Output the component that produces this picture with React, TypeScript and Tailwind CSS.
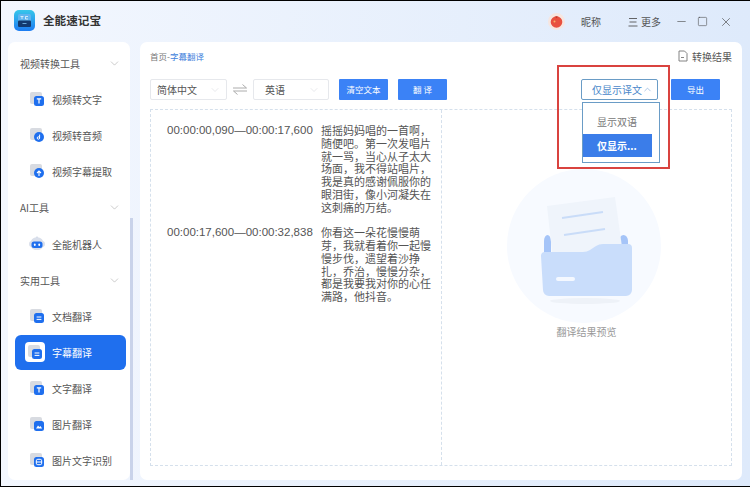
import React from "react";
import { ChevronDown, ChevronUp, Minus, Square, X } from "lucide-react";

const FONT = "font-['Noto_Sans_CJK_SC','Liberation_Sans',sans-serif]";

function ToolIcon({ kind }: { kind: string }) {
  if (kind === "bot") {
    return (
      <svg width="18" height="16" viewBox="0 0 18 16">
        <circle cx="9" cy="1.6" r="1" fill="#c9d2e3" />
        <path d="M1 8a3 3 0 0 1 2-3 6.5 6 0 0 1 12 0 3 3 0 0 1 2 3 3 3 0 0 1-2 3 6.5 5 0 0 1-12 0 3 3 0 0 1-2-3Z" fill="#d9dfeb" />
        <rect x="3.5" y="5.5" width="11" height="6.5" rx="2.5" fill="#1f6fee" />
        <rect x="6" y="7.5" width="1.6" height="2.4" rx=".7" fill="#fff" />
        <rect x="10.4" y="7.5" width="1.6" height="2.4" rx=".7" fill="#fff" />
      </svg>
    );
  }
  return (
    <svg width="14" height="14" viewBox="0 0 14 14">
      <rect x="0" y="0" width="12" height="12" rx="2" fill="#d8dbe1" />
      {kind === "note" || kind === "up" ? (
        <circle cx="9" cy="9" r="5" fill="#1f6fee" />
      ) : (
        <rect x="4" y="4" width="10" height="10" rx="2.5" fill="#1f6fee" />
      )}
      {kind === "note" && (
        <g fill="none" stroke="#fff" strokeWidth="1">
          <circle cx="8.4" cy="10" r="1.2" />
          <path d="M9.6 10V6.6" />
        </g>
      )}
      {kind === "up" && <path d="M9 12V7M7 9l2-2 2 2" fill="none" stroke="#fff" strokeWidth="1.1" />}
      {kind === "t" && <path d="M6.8 6.8h4.4M9 6.8v4.8" stroke="#fff" strokeWidth="1.2" />}
      {kind === "lines" && <path d="M6.6 8h4.8M6.6 10.4h4.8" stroke="#fff" strokeWidth="1" />}
      {kind === "image" && <path d="M6 11.5l2-3 1.5 1.6 1-1 1.6 2.4Z" fill="#fff" />}
      {kind === "scan" && (
        <g fill="none" stroke="#fff" strokeWidth="1">
          <rect x="6.3" y="6.3" width="5.4" height="5.4" rx="1.5" />
          <path d="M6.3 9h5.4" />
        </g>
      )}
    </svg>
  );
}

function GroupHeader({ label }: { label: string }) {
  return (
    <div className="h-9 pl-3 pr-[9px] flex items-center justify-between text-[10px] text-[#555]">
      <span>{label}</span>
      <ChevronDown size={13} strokeWidth={1} className="text-[#a0a0a0]" />
    </div>
  );
}

function ToolRow({ label, kind, active }: { label: string; kind: string; active?: boolean }) {
  if (active) {
    return (
      <div className="h-9 flex items-center">
        <div className="w-[111px] h-[35px] ml-[7px] rounded-[6px] bg-[#1f6fee] flex items-center text-[10px] text-white">
          <div className="w-[20px] h-[20px] ml-[10px] mr-[7px] rounded-[4px] bg-white flex items-center justify-center">
            <ToolIcon kind={kind} />
          </div>
          <span>{label}</span>
        </div>
      </div>
    );
  }
  return (
    <div className="h-9 flex items-center text-[10px] text-[#555]">
      <div className="w-[18px] ml-[20px] mr-[6px] flex justify-center">
        <ToolIcon kind={kind} />
      </div>
      <span>{label}</span>
    </div>
  );
}

function Picker({ label, className }: { label: string; className: string }) {
  return (
    <div className={`h-[21px] border border-[#e6e8ec] rounded-[2px] bg-white flex items-center justify-between text-[10px] text-[#555] ${className}`}>
      <span>{label}</span>
      <ChevronDown size={12} strokeWidth={1} className="text-[#d0d3d8]" />
    </div>
  );
}

function BlueButton({ label, className }: { label: string; className: string }) {
  return (
    <div className={`h-[21px] bg-[#3b82f6] rounded-[1px] flex items-center justify-center text-[8.5px] text-white ${className}`}>
      {label}
    </div>
  );
}

function Subtitle({ time, text }: { time: string; text: string }) {
  return (
    <div className="flex">
      <div className="w-[154px] shrink-0 text-[11.5px] leading-[13px] text-[#555] font-['Liberation_Sans',sans-serif] whitespace-nowrap">{time}</div>
      <div className="w-[111px] text-[11px] leading-[12.75px] text-[#555]">{text}</div>
    </div>
  );
}

function FolderArt() {
  return (
    <svg width="154" height="154" viewBox="0 0 154 154" className="mr-[6px]">
      <circle cx="77" cy="77" r="77" fill="#f7faff" />
      <path d="M37 72a3.5 6 0 0 1 7 0v20h-7Z" fill="#a5c4f8" />
      <path d="M112 72a4.500 6 0 0 1 9 0v20h-9Z" fill="#a5c4f8" />
      <path d="M40 37 L108 28 L116 85 L47 100Z" fill="#eff4fb" />
      <path d="M55 49 L96 43" stroke="#c9dcf8" strokeWidth="2" />
      <path d="M57 66 L98 60" stroke="#c9dcf8" strokeWidth="2" />
      <path d="M34 87a4 4 0 0 1 4-4h38q4 0 7-2l6-4q3-2 7-2h25a4 4 0 0 1 4 4v42a6 6 0 0 1-6 6H42a6 6 0 0 1-6-6Z" fill="#c9ddfb" />
      <rect x="49" y="108" width="19" height="4" rx="2" fill="#f4f8ff" />
      <ellipse cx="78" cy="132" rx="35" ry="3" fill="#eef2f8" />
    </svg>
  );
}

export default function App() {
  return (
    <div className={`relative w-[750px] h-[487px] overflow-hidden border-t border-l border-b border-black bg-gradient-to-r from-[#f3f7fe] to-[#deeafb] flex flex-col ${FONT}`}>
      {/* title bar */}
      <div className="h-[41px] shrink-0 flex items-center">
        <svg width="21" height="21" viewBox="0 0 21 21" className="ml-[13px] mb-[2px]">
          <defs>
            <linearGradient id="logoBg" x1="0" y1="0" x2="0" y2="1">
              <stop offset="0" stopColor="#37c6ea" />
              <stop offset="1" stopColor="#1c7cf2" />
            </linearGradient>
          </defs>
          <rect width="21" height="21" rx="5" fill="url(#logoBg)" />
          <rect x="4" y="4" width="13" height="13" rx="1.5" fill="#5fb4ef" />
          <rect x="4" y="10.5" width="13" height="6.500" rx="1" fill="#123a70" />
          <path d="M6.500 6.500h3M8 6.500v2.500M11.500 6.500h2.500M11.500 6.500v2.500h2.500" fill="none" stroke="#fff" strokeWidth=".7" />
          <path d="M8.500 13.500h4" stroke="#7fc4f5" strokeWidth=".8" />
        </svg>
        <span className="ml-[8px] mb-[2px] text-[11.6px] font-bold text-[#333]">全能速记宝</span>
        <div className="ml-auto mr-[17px] flex items-center text-[10px] text-[#555]">
          <svg width="17" height="17" viewBox="0 0 17 17">
            <circle cx="8.500" cy="8.500" r="8.500" fill="#f6e6e0" />
            <circle cx="8.500" cy="9" r="5.800" fill="#e8503f" />
            <path d="M7 3.800q1.500-1.200 3 0l-1.500 1.500Z" fill="#c0392b" />
            <circle cx="6.500" cy="8.500" r="1" fill="#f7b267" />
          </svg>
          <span className="ml-[16px]">昵称</span>
          <svg width="10" height="10" viewBox="0 0 10 10" className="ml-[27px] mr-[3px]">
            <path d="M1 1.500h8M1.500 5h7M.5 9h9" stroke="#555" strokeWidth=".9" />
          </svg>
          <span>更多</span>
          <Minus size={13} strokeWidth={1.1} className="ml-[14px] text-[#444]" />
          <Square size={11} strokeWidth={1.2} className="ml-[9px] text-[#444]" />
          <X size={14} strokeWidth={1.1} className="ml-[11px] text-[#444]" />
        </div>
      </div>

      <div className="flex-1 min-h-0 flex pb-[6px]">
        {/* sidebar */}
        <div className="relative ml-[7px] w-[122px] rounded-[7px] bg-white overflow-hidden pt-[3px] shrink-0">
          <GroupHeader label="视频转换工具" />
          <ToolRow label="视频转文字" kind="t" />
          <ToolRow label="视频转音频" kind="note" />
          <ToolRow label="视频字幕提取" kind="up" />
          <GroupHeader label="AI工具" />
          <div className="h-px" />
          <ToolRow label="全能机器人" kind="bot" />
          <GroupHeader label="实用工具" />
          <ToolRow label="文档翻译" kind="lines" />
          <ToolRow label="字幕翻译" kind="lines" active />
          <ToolRow label="文字翻译" kind="t" />
          <ToolRow label="图片翻译" kind="image" />
          <ToolRow label="图片文字识别" kind="scan" />
        </div>
        {/* sidebar scrollbar */}
        <div className="w-[3px] shrink-0 mt-[176px] bg-[#c9d3ea]" />

        {/* main panel */}
        <div className="ml-[7px] mr-[8px] flex-1 rounded-[7px] bg-white px-[10px] flex flex-col min-w-0">
          <div className="h-[28px] shrink-0 flex items-center justify-between">
            <div className="text-[8.5px] text-[#777]">
              首页-<span className="text-[#3f7fdc]">字幕翻译</span>
            </div>
            <div className="flex items-center text-[10px] text-[#555]">
              <svg width="10" height="12" viewBox="0 0 10 12" className="mr-[4px]">
                <path d="M1 1h5.500L9 3.500V11H1Z M3 7.500h3" fill="none" stroke="#777" strokeWidth=".9" />
              </svg>
              转换结果
            </div>
          </div>

          <div className="mt-[9px] h-[21px] shrink-0 flex items-center">
            <Picker label="简体中文" className="w-[77px] pl-[6px] pr-[5px]" />
            <svg width="14" height="13" viewBox="0 0 14 13" className="mx-[6px]">
              <path d="M0 5h13.500L9.500 1.500M14 8H.5l4 3.500" fill="none" stroke="#a3a3a3" strokeWidth=".9" />
            </svg>
            <Picker label="英语" className="w-[76px] pl-[11px] pr-[8px]" />
            <BlueButton label="清空文本" className="w-[49px] ml-[10px]" />
            <BlueButton label="翻 译" className="w-[49px] ml-[10px]" />
            <div className="w-[77px] h-[21px] ml-[134px] rounded-[2px] border border-[#6a9cc6] flex items-center justify-end pr-[4px] text-[10px] text-[#4a87c9]">
              仅显示译文
              <ChevronUp size={11} strokeWidth={1} />
            </div>
            <BlueButton label="导出" className="w-[49px] ml-[13px]" />
          </div>

          <div className="mt-[9px] mb-[14px] flex-1 min-h-0 flex border border-dashed border-[#d5e0ec]">
            <div className="w-[291px] shrink-0 pt-[14px] pl-[16px] flex flex-col gap-[13px] border-r border-dashed border-[#d5e0ec]">
              <Subtitle
                time="00:00:00,090—00:00:17,600"
                text="摇摇妈妈唱的一首啊，随便吧。第一次发唱片就一骂，当心从子太大场面，我不得站唱片，我是真的感谢佩服你的眼泪街，像小河凝失在这刺痛的万结。"
              />
              <Subtitle
                time="00:00:17,600—00:00:32,838"
                text="你看这一朵花慢慢萌芽，我就看着你一起慢慢步伐，遗望着沙挣扎，乔治，慢慢分杂，都是我要我对你的心任满路，他抖音。"
              />
            </div>
            <div className="flex-1 flex flex-col items-center pt-[59px]">
              <FolderArt />
              <div className="mt-px text-[10px] text-[#999]">翻译结果预览</div>
            </div>
          </div>
        </div>
      </div>

      {/* open dropdown and the red marker drawn over the page */}
      <div className="absolute left-[581px] top-[101px] w-[78px] h-[61px] bg-white border border-[#6a9cc6] pt-[1px] text-[10px]">
        <div className="h-[30px] pl-[14px] flex items-end pb-[5px] text-[#777]">显示双语</div>
        <div className="w-[69px] h-[23px] pl-[14px] bg-[#3b7de9] flex items-center font-bold text-white">仅显示...</div>
      </div>
      <div className="absolute left-[556px] top-[64px] w-[113px] h-[104px] border-2 border-[#d9433f]" />
    </div>
  );
}
